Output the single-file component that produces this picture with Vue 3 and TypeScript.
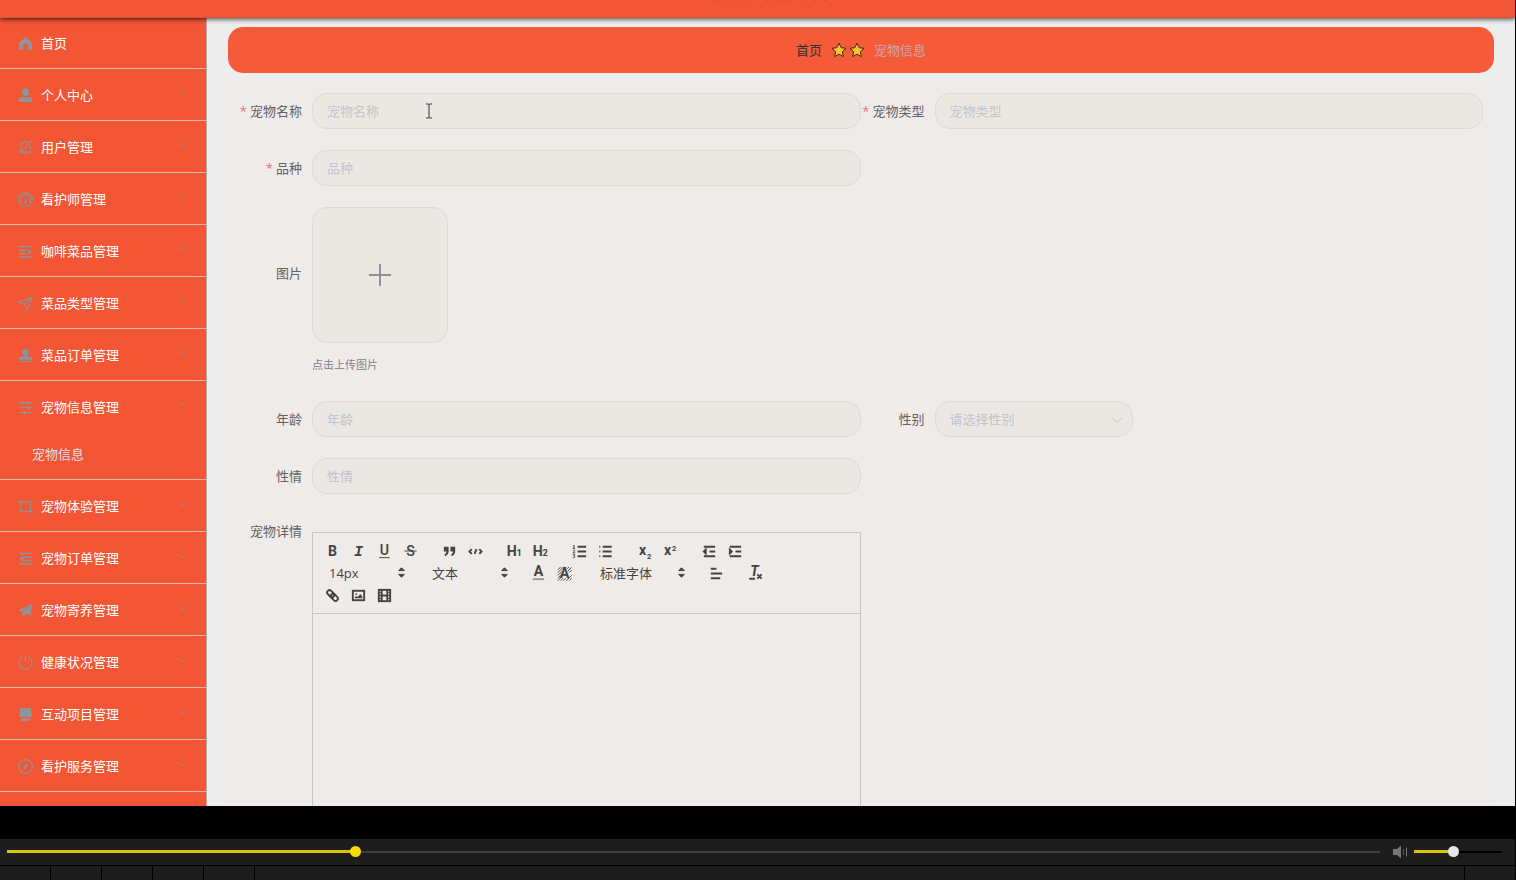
<script setup lang="ts">
import { ref } from 'vue'

interface MenuItem {
  label: string
  icon: string
  children?: string[]
  plain?: boolean
}

const menu: MenuItem[] = [
  { label: '首页', icon: 'home', plain: true },
  { label: '个人中心', icon: 'user' },
  { label: '用户管理', icon: 'mute' },
  { label: '看护师管理', icon: 'gauge' },
  { label: '咖啡菜品管理', icon: 'unfold' },
  { label: '菜品类型管理', icon: 'position' },
  { label: '菜品订单管理', icon: 'stamp' },
  { label: '宠物信息管理', icon: 'sliders', children: ['宠物信息'] },
  { label: '宠物体验管理', icon: 'crop' },
  { label: '宠物订单管理', icon: 'fold' },
  { label: '宠物寄养管理', icon: 'plane' },
  { label: '健康状况管理', icon: 'power' },
  { label: '互动项目管理', icon: 'shop' },
  { label: '看护服务管理', icon: 'compass' },
]

const icons: Record<string, string> = {
  home: '<path class="f" d="M8 1 15 7v8h-4.500v-4.500a2.500 2.500 0 0 0-5 0V15H1V7z"/>',
  user: '<circle class="f" cx="8" cy="4.600" r="4"/><path class="f" d="M1 15v-2.600C1 10.600 2.400 9.600 4 9.600h8c1.600 0 3 1 3 2.800V15z"/>',
  mute: '<path d="M3 12.500V7a5 5 0 0 1 8.300-3.700M13 6v6.500M.8 12.900h14.400M6.800 14.600h2.400M8 .4V2M14.600 1.200 1.800 14.200"/>',
  gauge: '<circle cx="8" cy="8" r="7.400"/><path d="M4.200 11.600a5.200 5.200 0 1 1 7.600 0"/><path class="f" d="m9.800 4.600-.6 6.600a1.300 1.300 0 1 1-1.600-1z"/>',
  unfold: '<path class="b" d="M1 2.600h14M1 6.600h8M1 10h8M1 13.800h14"/><path class="f" d="m10.600 5 4.400 3.200-4.400 3.200z"/>',
  fold: '<path class="b" d="M1 2.600h14M5.500 6.600H15M5.500 10H15M1 13.800h14"/><path class="f" d="M5.600 5.200 1.400 8.200l4.200 3z"/>',
  position: '<path d="M15 1.200.9 6.700l6.300 2.100 2.300 6.400zM15 1.200 7.200 8.800"/>',
  stamp: '<path class="f" d="M8 .8a3.800 3.800 0 0 1 2.200 6.900v1.500h3.300c1 0 1.700.7 1.700 1.600v1.700H.8v-1.700c0-.9.7-1.600 1.700-1.600h3.300V7.700A3.800 3.800 0 0 1 8 .8zM1.800 13.500h12.400v1.600H1.800z"/>',
  sliders: '<path d="M.8 3h14.400M.8 8h14.400M.8 13.400h14.400"/><rect class="f" x="4" y="1.400" width="2" height="3.200"/><rect class="f" x="10.500" y="6.200" width="2.400" height="3.600"/><rect class="f" x="6.500" y="11.700" width="2" height="3.400"/>',
  crop: '<path d="M.4 3h12.800v12.600M3 .4v12.800h12.600"/>',
  plane: '<path class="f" d="M15.400.6.5 7.600l4 2zM15.400.6l-1.900 12.700-4.800-2L5 15.500V10z"/>',
  power: '<path d="M5 1.800a7 7 0 1 0 6 0M8 .3v6.500"/>',
  shop: '<path class="f" d="M2.500 1h11l1.300 8.500c0 1.200-1.500 2-2.300.9-.8 1-2 1-2.800 0-.9 1-2.400 1-3.300 0-.8 1-2 1-2.900 0-.8 1.100-2.300.3-2.300-.9zM3.200 12.200h9.600V15H3.200z"/>',
  compass: '<circle cx="8" cy="8" r="7.400"/><path class="f" d="M10.600 4.300 9.200 9.500l-3.400 2.200 1.100-4.900z"/>',
}

const tool: Record<string, string> = {
  bold: '<text class="t" x="9" y="14">B</text>',
  italic: '<text class="t mono" x="9" y="14">I</text>',
  underline: '<text class="t thin" x="9" y="12.500">U</text><path d="M3.500 15.500h11" class="th"/>',
  strike: '<text class="t thin" x="9" y="14">S</text><path d="M2.500 8.500h13" class="th"/>',
  quote: '<path class="fs" d="M4 5h3v3H4zM11 5h3v3h-3z"/><path d="M7 8c0 4-3 5-3 5M14 8c0 4-3 5-3 5"/>',
  code: '<path d="M5 6.500 2.600 9 5 11.500M13 6.500 15.400 9 13 11.500M10 6.500 8 11.500"/>',
  h1: '<text class="t" x="6" y="14">H</text><text class="t s" x="14" y="14">1</text>',
  h2: '<text class="t" x="6" y="14">H</text><text class="t s" x="14" y="14">2</text>',
  ol: '<path d="M7 4h9M7 9h9M7 14h9"/><path class="th" d="M2 3.200 3.300 2.500v3M1.800 5.700h2.600M2 8c1-1 2.400-.2 1.800.8L2 10.500h2.500M2 12.500h2l-1 1.300c1.600 0 1.500 2.200-1 1.700"/>',
  ul: '<path d="M6 4h9.500M6 9h9.500M6 14h9.500M2.500 4h1M2.500 9h1M2.500 14h1"/>',
  sub: '<text class="t" x="7" y="13">x</text><text class="t xs" x="14" y="16.500">2</text>',
  sup: '<text class="t" x="6" y="13">x</text><text class="t xs" x="13" y="8">2</text>',
  outdent: '<path d="M3 14h12M3 4h12M9 9h6"/><path class="fs" d="M5 7v4L3 9z"/>',
  indent: '<path d="M3 14h12M3 4h12M9 9h6"/><path class="fs" d="M3 7v4l2-2z"/>',
  color: '<text class="t" x="9" y="12">A</text><path class="th pale" d="M3 15h12"/>',
  back: '<path class="th" d="M2 5l3-3M2 8l6-6M2 11l4-4M2 14l3-3M2 16.500l4-4M5 16.500l2.500-2.500M8 16.500l2.500-2.500M11 16.500l5.500-5.500M14 16.500l2.500-2.500M9 4l2-2M12 4l2-2M12.500 6.500l4-4M14 8l2.500-2.500"/><text class="t" x="9" y="14">A</text>',
  align: '<path d="M4 9h12M4 14h10M4 4h6"/>',
  clean: '<text class="t it" x="9" y="12">T</text><path d="M3.500 14.500h6M12 10l4.500 4.500M16.500 10 12 14.500"/>',
  link: '<g transform="rotate(45 9 9)"><rect x="2" y="6.500" width="8.500" height="5" rx="2.500"/><rect x="7.500" y="6.500" width="8.500" height="5" rx="2.500"/></g>',
  image: '<rect x="3" y="4" width="12" height="10"/><circle class="fs2" cx="6.500" cy="7.500" r="1"/><path class="fs2" d="M5 12v-1l1.500-1.500L8 10.700 11 7.500l2 2.500v2z"/>',
  video: '<rect x="3" y="3" width="12" height="12"/><path d="M6 3v12M12 3v12M6 9h6"/><path class="th" d="M3 6h3M3 9h3M3 12h3M12 6h3M12 9h3M12 12h3"/>',
}

const rowOne = [['bold', 'italic', 'underline', 'strike'], ['quote', 'code'], ['h1', 'h2'], ['ol', 'ul'], ['sub', 'sup'], ['outdent', 'indent']]

const form = ref({ name: '', type: '', breed: '', age: '', sex: '', temper: '' })
const progress = ref(252)
const volume = ref(44)
</script>

<template>
  <div class="window">
    <div class="screen">
      <header class="top"><h1>宠物咖啡馆平台</h1></header>
      <div class="body">
        <nav class="side">
          <div v-for="m in menu" :key="m.label" class="item">
            <a href="#" class="head">
              <svg class="mi" viewBox="0 0 16 16" v-html="icons[m.icon]"></svg>
              <span>{{ m.label }}</span>
              <svg v-if="!m.plain" class="chev" :class="{ up: m.children }" viewBox="0 0 10 10"><path d="M1 3l4 4 4-4" /></svg>
            </a>
            <a v-for="c in m.children" :key="c" href="#" class="sub">{{ c }}</a>
          </div>
        </nav>
        <main>
          <div class="crumb">
            <a href="#">首页</a>
            <span class="stars">
              <svg v-for="n in 2" :key="n" viewBox="0 0 16 16"><path d="M8 1.200l2.100 4.500 4.900.6-3.600 3.400.9 4.900L8 12.200l-4.300 2.400.9-4.900L1 6.300l4.900-.6z" /></svg>
            </span>
            <span class="here">宠物信息</span>
          </div>
          <form class="panel" @submit.prevent>
            <div class="field">
              <label for="name" class="req">宠物名称</label>
              <div class="wrap">
                <input id="name" v-model="form.name" type="text" placeholder="宠物名称" />
                <svg class="beam" viewBox="0 0 8 16"><path d="M1 1h2.500l.5.5.5-.5H7M4 1.500v13M1 15h2.500l.5-.5.5.5H7" /></svg>
              </div>
            </div>
            <div class="field">
              <label for="type" class="req">宠物类型</label>
              <input id="type" v-model="form.type" type="text" placeholder="宠物类型" />
            </div>
            <div class="field whole">
              <label for="breed" class="req">品种</label>
              <input id="breed" v-model="form.breed" type="text" placeholder="品种" />
            </div>
            <div class="field whole pic">
              <label for="upload">图片</label>
              <div>
                <button id="upload" type="button" class="upload" aria-label="图片">
                  <svg viewBox="0 0 22 22"><path d="M11 0v22M0 11h22" /></svg>
                </button>
                <p>点击上传图片</p>
              </div>
            </div>
            <div class="field">
              <label for="age">年龄</label>
              <input id="age" v-model="form.age" type="text" placeholder="年龄" />
            </div>
            <div class="field">
              <label for="sex">性别</label>
              <div class="select">
                <select id="sex" v-model="form.sex">
                  <option value="">请选择性别</option>
                </select>
                <svg viewBox="0 0 10 10"><path d="M0 2.500l5 5 5-5" /></svg>
              </div>
            </div>
            <div class="field whole">
              <label for="temper">性情</label>
              <input id="temper" v-model="form.temper" type="text" placeholder="性情" />
            </div>
            <div class="field whole rich">
              <label id="detail">宠物详情</label>
              <div class="editor">
                <div class="bar">
                  <span v-for="(g, i) in rowOne" :key="i" class="grp">
                    <button v-for="b in g" :key="b" type="button" :aria-label="b"><svg viewBox="0 0 18 18" v-html="tool[b]"></svg></button>
                  </span>
                  <span class="grp pick">
                    <select aria-label="size"><option>14px</option></select>
                    <svg viewBox="0 0 18 18"><path d="M6 7l3-3 3 3zM6 11l3 3 3-3z" /></svg>
                  </span>
                  <span class="grp pick">
                    <select aria-label="header"><option>文本</option></select>
                    <svg viewBox="0 0 18 18"><path d="M6 7l3-3 3 3zM6 11l3 3 3-3z" /></svg>
                  </span>
                  <span class="grp">
                    <button v-for="b in ['color', 'back']" :key="b" type="button" :aria-label="b"><svg viewBox="0 0 18 18" v-html="tool[b]"></svg></button>
                  </span>
                  <span class="grp pick wide">
                    <select aria-label="font"><option>标准字体</option></select>
                    <svg viewBox="0 0 18 18"><path d="M6 7l3-3 3 3zM6 11l3 3 3-3z" /></svg>
                  </span>
                  <span class="grp"><button type="button" aria-label="align"><svg viewBox="0 0 18 18" v-html="tool.align"></svg></button></span>
                  <span class="grp"><button type="button" aria-label="clean"><svg viewBox="0 0 18 18" v-html="tool.clean"></svg></button></span>
                  <span class="grp">
                    <button v-for="b in ['link', 'image', 'video']" :key="b" type="button" :aria-label="b"><svg viewBox="0 0 18 18" v-html="tool[b]"></svg></button>
                  </span>
                </div>
                <div class="text" contenteditable="true" role="textbox" aria-labelledby="detail"></div>
              </div>
            </div>
          </form>
        </main>
      </div>
    </div>
    <div class="player">
      <input v-model.number="progress" class="seek" type="range" min="0" max="1000" aria-label="progress" :style="{ '--p': progress / 10 + '%' }" />
      <svg class="speaker" viewBox="0 0 16 14"><path class="cone" d="M1 4h4l4-3.500v13L5 10H1z" /><path d="M11.500 4v6" /><path class="far" d="M14.500 2.500v9" /></svg>
      <input v-model.number="volume" class="vol" type="range" min="0" max="100" aria-label="volume" :style="{ '--p': volume + '%' }" />
    </div>
    <div class="tiles"><i v-for="n in 5" :key="n"></i><i class="rest"></i><i></i></div>
  </div>
</template>

<style>
body {
  background: #000;
}
</style>

<style scoped>
* {
  box-sizing: border-box;
}
.window {
  height: 100vh;
  display: flex;
  flex-direction: column;
  background: #000;
  font: 13px/20px "Open Sans", "Noto Sans CJK SC", sans-serif;
  color: #606266;
}
a {
  text-decoration: none;
  color: inherit;
}
button,
input,
select {
  font: inherit;
  color: inherit;
  margin: 0;
}
.screen {
  flex: 1;
  min-height: 0;
  margin: 0 1px 33px 0;
  overflow: hidden;
  display: flex;
  flex-direction: column;
  background: #ededee;
}
.top {
  flex: none;
  height: 17px;
  background: #f35634;
  display: flex;
  justify-content: center;
  align-items: flex-start;
  position: relative;
  z-index: 1;
  box-shadow: 0 1px 0 #d5523a, 0 2px 5px rgba(0, 0, 0, 0.75);
}
.top h1 {
  margin: -20px 0 0;
  padding-left: 16px;
  font-size: 18px;
  line-height: 24px;
  font-weight: 400;
  color: #c5432c;
}
.body {
  flex: 1;
  min-height: 0;
  display: flex;
}
.side {
  flex: none;
  width: 207px;
  background: #f35634;
  border-right: 1px solid #b9a9a4;
}
.item {
  border-bottom: 1px solid #eeb5a5;
}
.head {
  height: 51px;
  padding: 0 18px;
  display: flex;
  align-items: center;
  color: #fff;
}
.mi {
  width: 15px;
  height: 15px;
  margin: 2px 8px 0 0;
  fill: none;
  stroke: #989090;
  stroke-width: 1.200;
  overflow: visible;
}
.mi :deep(.f) {
  fill: #909399;
  stroke: none;
}
.mi :deep(.b) {
  stroke-width: 1.600;
}
.chev {
  width: 10px;
  height: 10px;
  margin: 0 1px 4px auto;
  fill: none;
  stroke: #b08078;
}
.chev.up {
  transform: rotate(180deg);
}
.sub {
  display: block;
  height: 47px;
  padding: 12px 32px;
  color: #dcdfe6;
}
main {
  flex: 1;
  min-width: 0;
  padding: 10px 21px 0;
}
.crumb {
  height: 46px;
  border-radius: 15px;
  background: #f55a39;
  display: flex;
  align-items: center;
  justify-content: center;
  gap: 9px;
  margin-bottom: 9px;
}
.crumb a {
  color: #303133;
}
.here {
  color: #c9a6ab;
}
.stars {
  display: flex;
  gap: 2px;
}
.stars svg {
  width: 16px;
  height: 16px;
  fill: #fbc531;
  stroke: #4d2415;
}
.panel {
  background: #efebe8;
  padding: 11px 11px 0 10px;
  display: grid;
  grid-template-columns: 1fr 1fr;
  row-gap: 21px;
}
.field {
  display: flex;
  align-items: center;
  min-width: 0;
}
.whole {
  grid-column: 1 / -1;
  width: 50%;
}
label {
  flex: none;
  width: 74px;
  padding-right: 10px;
  text-align: right;
  white-space: nowrap;
  display: flex;
  justify-content: flex-end;
}
.req::before {
  content: "*";
  color: #f56c6c;
  margin-right: 3px;
}
.wrap {
  flex: 1;
  display: flex;
  position: relative;
}
.field input,
.select select {
  flex: 1;
  min-width: 0;
  width: 100%;
  height: 36px;
  border: 1px solid #d8dbdd;
  border-radius: 15px;
  background: #ebe8e3;
  padding: 0 14px;
  outline: 0;
}
.field input::placeholder {
  color: #c0c4cc;
  opacity: 1;
}
.beam {
  position: absolute;
  left: 113px;
  top: 10px;
  width: 8px;
  height: 16px;
  fill: none;
  stroke: #333;
}
.select {
  width: 198px;
  position: relative;
}
.select select {
  appearance: none;
  color: #c0c4cc;
}
.select svg {
  position: absolute;
  right: 11px;
  top: 14px;
  width: 10px;
  height: 10px;
  fill: none;
  stroke: #c0c4cc;
}
.upload {
  width: 136px;
  height: 136px;
  border: 1px solid #d8dbdd;
  border-radius: 15px;
  background: #ebe8e3;
  display: flex;
  align-items: center;
  justify-content: center;
}
.upload svg {
  width: 22px;
  height: 22px;
  stroke: #8c939d;
  stroke-width: 2;
}
.pic {
  align-items: flex-start;
  margin-bottom: 4px;
}
.pic label {
  padding-top: 56px;
}
.pic p {
  margin: 12px 0 0;
  padding-bottom: 1px;
  font-size: 11px;
  color: #7c828c;
}
.rich {
  align-items: flex-start;
}
.rich label {
  padding-top: 6px;
}
.editor {
  flex: 1;
  min-width: 0;
  margin-top: 17px;
  border: 1px solid #c5c7c4;
}
.bar {
  padding: 7px;
  display: flex;
  flex-wrap: wrap;
  border-bottom: 1px solid #c5c7c4;
  color: #444;
}
.grp {
  display: flex;
  margin-right: 13px;
}
.bar button {
  width: 26px;
  height: 22px;
  padding: 2px 4px;
  border: 0;
  background: none;
}
.bar svg {
  display: block;
  width: 17px;
  height: 17px;
  fill: none;
  stroke: #444;
  stroke-width: 2;
}
.bar :deep(.t) {
  fill: #444;
  stroke: none;
  font: 700 15px Roboto, sans-serif;
  text-anchor: middle;
}
.bar :deep(.thin) {
  font-weight: 500;
}
.bar :deep(.mono) {
  font: italic 700 16px "Liberation Mono", monospace;
}
.bar :deep(.it) {
  font-style: italic;
}
.bar :deep(.s) {
  font-size: 10px;
}
.bar :deep(.xs) {
  font-size: 8px;
}
.bar :deep(.th) {
  stroke-width: 1;
}
.bar :deep(.pale) {
  stroke: #999;
  stroke-width: 2;
}
.bar :deep(.fs) {
  fill: #444;
}
.bar :deep(.fs2) {
  fill: #444;
  stroke: none;
}
.pick {
  position: relative;
  width: 90px;
  height: 22px;
}
.pick.wide {
  width: 99px;
}
.pick select {
  width: 100%;
  appearance: none;
  border: 0;
  background: none;
  padding: 0 9px;
}
.bar .pick svg {
  position: absolute;
  right: 0;
  top: 2px;
  fill: #444;
  stroke-width: 1;
  pointer-events: none;
}
.text {
  min-height: 320px;
  outline: 0;
}
.player {
  flex: none;
  height: 26px;
  margin-right: 1px;
  padding: 0 13px 1px 7px;
  display: flex;
  align-items: center;
  background: #1d1d1d;
}
input[type="range"] {
  appearance: none;
  height: 11px;
  background: none;
}
.seek {
  flex: 1;
  --on: #d8c408;
  --off: #404040;
  --knob: #f6dc00;
}
.vol {
  width: 88px;
  --on: #d8c408;
  --off: #000;
  --knob: #e8e8e8;
}
input[type="range"]::-webkit-slider-runnable-track {
  height: 3px;
  background: linear-gradient(var(--on), var(--on)) 0 0 / var(--p) 3px no-repeat, linear-gradient(var(--off), var(--off)) 0 1px / 100% 2px no-repeat;
}
input[type="range"]::-webkit-slider-thumb {
  appearance: none;
  width: 11px;
  height: 11px;
  margin-top: -4px;
  border-radius: 50%;
  background: var(--knob);
}
.speaker {
  width: 16px;
  height: 14px;
  margin: 0 6px 0 12px;
  fill: none;
  stroke: #555;
}
.cone {
  fill: #777;
  stroke: none;
}
.far {
  stroke: #777;
}
.tiles {
  flex: none;
  height: 15px;
  margin-right: 1px;
  padding-top: 1px;
  display: flex;
  gap: 1px;
}
.tiles i {
  width: 50px;
  background: #1d1d1d;
}
.tiles .rest {
  flex: 1;
}
</style>
